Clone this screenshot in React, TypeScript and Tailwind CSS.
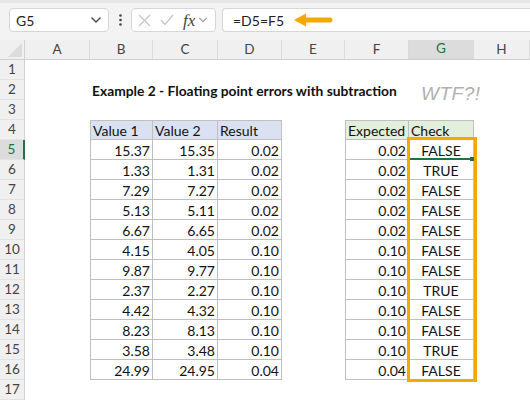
import React from "react";

const W = ["w-[25px]", "w-[65px]", "w-[63px]", "w-[65px]", "w-[64px]", "w-[63px]", "w-[64px]", "w-[65px]", "w-[56px]"];
const LETTERS = ["A", "B", "C", "D", "E", "F", "G", "H"];

const DATA: [string, string, string, string, string][] = [
  ["15.37", "15.35", "0.02", "0.02", "FALSE"],
  ["1.33", "1.31", "0.02", "0.02", "TRUE"],
  ["7.29", "7.27", "0.02", "0.02", "FALSE"],
  ["5.13", "5.11", "0.02", "0.02", "FALSE"],
  ["6.67", "6.65", "0.02", "0.02", "FALSE"],
  ["4.15", "4.05", "0.10", "0.10", "FALSE"],
  ["9.87", "9.77", "0.10", "0.10", "FALSE"],
  ["2.37", "2.27", "0.10", "0.10", "TRUE"],
  ["4.42", "4.32", "0.10", "0.10", "FALSE"],
  ["8.23", "8.13", "0.10", "0.10", "FALSE"],
  ["3.58", "3.48", "0.10", "0.10", "TRUE"],
  ["24.99", "24.95", "0.04", "0.04", "FALSE"],
];

function Chevron({ className = "" }: { className?: string }) {
  return (
    <svg width="12" height="8" viewBox="0 0 12 8" className={className}>
      <path d="M1.5 1.5 L6 6 L10.5 1.5" fill="none" stroke="currentColor" strokeWidth="1.3" />
    </svg>
  );
}

function TopBar() {
  return (
    <div className="h-[40px] bg-[#f3f3f3] border-t-[3px] border-[#e6e6e6] flex items-start pt-[5px] pl-[9px] gap-0">
      <div className="w-[100px] h-[24px] bg-white border border-[#d6d6d6] rounded-[4px] flex items-center justify-between pl-[6px] pr-[6px] text-[14px] text-[#222]">
        <span>G5</span>
        <Chevron className="text-[#444]" />
      </div>
      <div className="w-[22px] h-[24px] flex items-center justify-center">
        <svg width="3" height="12" viewBox="0 0 3 12">
          <circle cx="1.5" cy="1.5" r="1.3" fill="#444" />
          <circle cx="1.5" cy="6" r="1.3" fill="#444" />
          <circle cx="1.5" cy="10.5" r="1.3" fill="#444" />
        </svg>
      </div>
      <div className="w-[85px] h-[24px] bg-white border border-[#d6d6d6] rounded-[4px] flex items-center pl-[6px] gap-[9px]">
        <svg width="13" height="13" viewBox="0 0 13 13">
          <path d="M1 1 L12 12 M12 1 L1 12" stroke="#c4c4c4" strokeWidth="1.2" />
        </svg>
        <svg width="14" height="12" viewBox="0 0 14 12">
          <path d="M1 6 L5 10.5 L13 1" fill="none" stroke="#c4c4c4" strokeWidth="1.2" />
        </svg>
        <div className="flex items-center gap-[3px]">
          <span className="text-[17px] italic text-[#444] font-['Liberation_Serif',serif] leading-none">fx</span>
          <Chevron className="text-[#999] w-[10px]" />
        </div>
      </div>
      <div className="ml-[6px] flex-1 h-[24px] bg-white border border-r-0 border-[#d6d6d6] rounded-l-[4px] flex items-center pl-[10px] text-[14px] text-[#222]">
        <span>=D5=F5</span>
        <svg width="40" height="14" viewBox="0 0 40 14" className="ml-[9px]">
          <path d="M8 7 L37 7" stroke="#f5a800" strokeWidth="5" strokeLinecap="round" />
          <path d="M1 7 L13 0.5 L13 13.5 Z" fill="#f5a800" />
        </svg>
      </div>
    </div>
  );
}

function HeaderRow() {
  return (
    <div className="flex h-[20px] bg-[#f0f0f0] border-b border-[#d0d0d0]">
      <div className={`${W[0]} relative border-r border-[#d0d0d0]`}>
        <div className="absolute right-[2px] bottom-[2px] w-0 h-0 border-l-[14px] border-l-transparent border-b-[14px] border-b-[#dcdcdc]" />
      </div>
      {LETTERS.map((l, i) => {
        const sel = l === "G";
        return (
          <div
            key={l}
            className={`${W[i + 1]} flex items-center justify-center text-[13.5px] ${
              sel ? "bg-[#dcdcdc] text-[#217346] border-b-2 border-[#217346]" : "text-[#444]"
            } border-r border-[#dadada]`}
          >
            {l}
          </div>
        );
      })}
    </div>
  );
}

function RowHead({ n }: { n: number }) {
  const sel = n === 5;
  return (
    <div
      className={`${W[0]} h-[20px] flex items-center justify-center text-[13.5px] border-b border-[#e3e3e3] ${
        sel ? "bg-[#dcdcdc] text-[#217346] border-r-2 border-r-[#217346]" : "bg-[#f0f0f0] text-[#444] border-r border-r-[#d0d0d0]"
      }`}
    >
      {n}
    </div>
  );
}

const cellBase = "h-[20px] flex items-center text-[14px] text-[#111] leading-none pt-[2px]";

export default function App() {
  const rows: React.ReactNode[] = [];
  for (let r = 1; r <= 17; r++) {
    let cells: React.ReactNode = null;
    if (r === 2) {
      cells = (
        <>
          <div className={W[1]} />
          <div className="flex-1 relative h-[20px]">
            <span className="absolute left-[2px] top-[1px] whitespace-nowrap text-[13.8px] font-bold text-[#111]">
              Example 2 - Floating point errors with subtraction
            </span>
            <span className="absolute left-[331px] top-[0px] whitespace-nowrap text-[19px] italic text-[#b0b0b0] font-['Liberation_Sans',sans-serif] tracking-[0.5px]">
              WTF?!
            </span>
          </div>
        </>
      );
    } else if (r === 4) {
      cells = (
        <>
          <div className={W[1]} />
          <div className={`${W[2]} ${cellBase} bg-[#d9e1f2] border border-r border-[#bfbfbf] pl-[2px]`}>Value 1</div>
          <div className={`${W[3]} ${cellBase} bg-[#d9e1f2] border-t border-b border-r border-[#bfbfbf] pl-[2px]`}>Value 2</div>
          <div className={`${W[4]} ${cellBase} bg-[#d9e1f2] border-t border-b border-r border-[#bfbfbf] pl-[2px]`}>Result</div>
          <div className={W[5]} />
          <div className={`${W[6]} ${cellBase} bg-[#e2efda] border border-[#bfbfbf] pl-[2px]`}>Expected</div>
          <div className={`${W[7]} ${cellBase} bg-[#e2efda] border-t border-b border-r border-[#bfbfbf] pl-[2px]`}>Check</div>
        </>
      );
    } else if (r >= 5 && r <= 16) {
      const d = DATA[r - 5];
      cells = (
        <>
          <div className={W[1]} />
          <div className={`${W[2]} ${cellBase} justify-end pr-[2px] border-l border-r border-b border-[#bfbfbf]`}>{d[0]}</div>
          <div className={`${W[3]} ${cellBase} justify-end pr-[2px] border-r border-b border-[#bfbfbf]`}>{d[1]}</div>
          <div className={`${W[4]} ${cellBase} justify-end pr-[2px] border-r border-b border-[#bfbfbf]`}>{d[2]}</div>
          <div className={W[5]} />
          <div className={`${W[6]} ${cellBase} justify-end pr-[2px] border-l border-r border-b border-[#bfbfbf]`}>{d[3]}</div>
          <div className={`${W[7]} ${cellBase} justify-center border-r border-b border-[#bfbfbf]`}>{d[4]}</div>
        </>
      );
    }
    rows.push(
      <div key={r} className="flex h-[20px]">
        <RowHead n={r} />
        {cells}
      </div>
    );
  }

  return (
    <div className="w-[530px] h-[400px] overflow-hidden bg-white font-['Lato',sans-serif]">
      <TopBar />
      <HeaderRow />
      <div className="relative">
        {rows}
        {/* highlight box */}
        <div className="absolute left-[407px] top-[77px] w-[70px] h-[245px] border-[3px] border-[#f5a800]" />
        {/* active cell marker */}
        <div className="absolute left-[410px] top-[98px] w-[61px] h-[2px] bg-[#217346]" />
        <div className="absolute left-[470px] top-[97px] w-[4px] h-[4px] bg-[#217346]" />
      </div>
    </div>
  );
}
